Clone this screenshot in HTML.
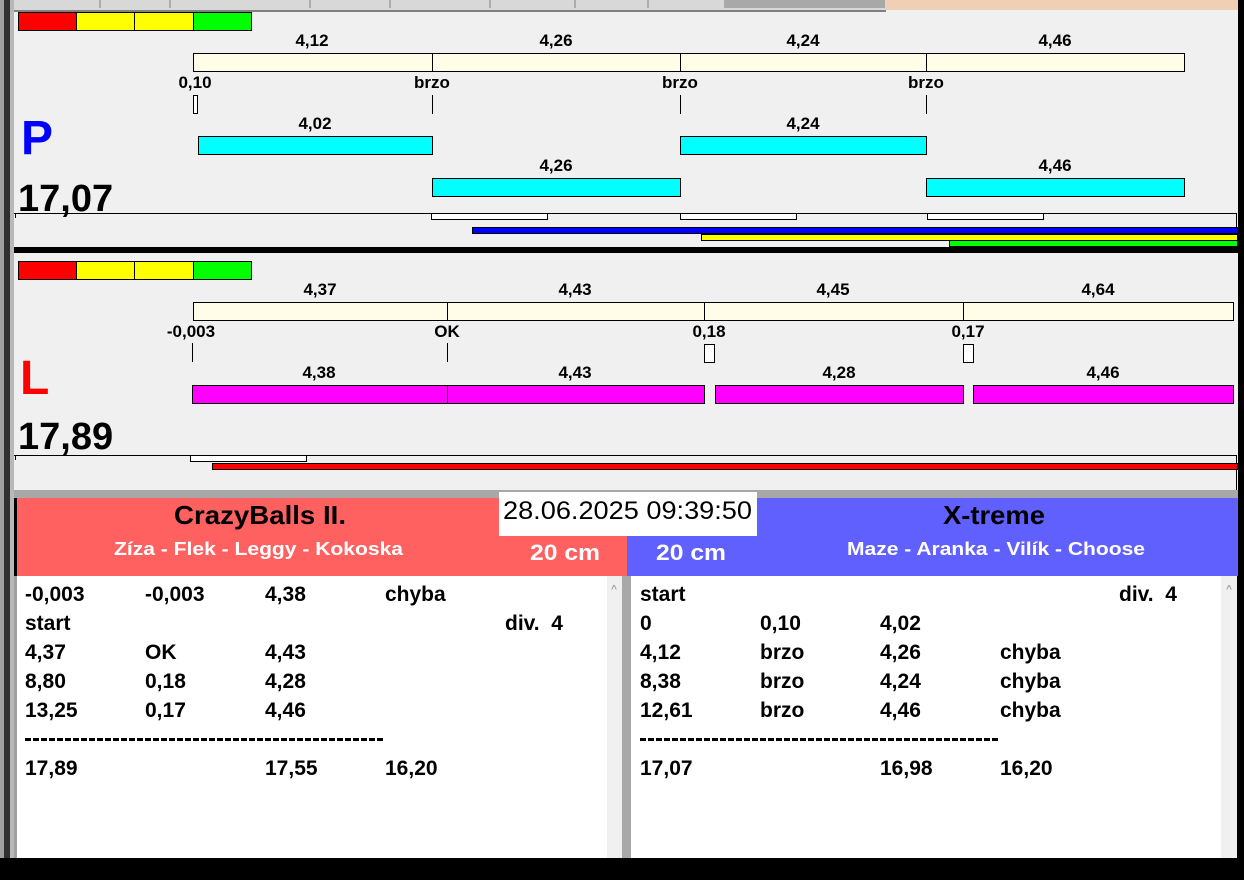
<!DOCTYPE html>
<html><head><meta charset="utf-8"><style>
html,body{margin:0;padding:0;background:#000;}
svg{display:block;font-family:"Liberation Sans",Arial,sans-serif;font-weight:bold;}
</style></head><body>
<svg width="1244" height="880" viewBox="0 0 1244 880" xmlns="http://www.w3.org/2000/svg">
<rect x="0" y="0" width="1244" height="880" fill="#000"/>
<rect x="0" y="0" width="4" height="858" fill="#a0a0a0"/>
<rect x="4" y="0" width="6" height="858" fill="#303030"/>
<rect x="10" y="0" width="4" height="858" fill="#b8b8b8"/>
<rect x="14" y="0" width="872" height="10" fill="#d8d8d8"/>
<g stroke="#808080" stroke-width="1">
<line x1="100" y1="0" x2="100" y2="8"/><line x1="170" y1="0" x2="170" y2="8"/><line x1="310" y1="0" x2="310" y2="8"/><line x1="390" y1="0" x2="390" y2="8"/><line x1="490" y1="0" x2="490" y2="8"/><line x1="575" y1="0" x2="575" y2="8"/><line x1="648" y1="0" x2="648" y2="8"/><line x1="725" y1="0" x2="725" y2="8"/>
</g>
<rect x="725" y="0" width="160" height="8" fill="#a8a8a8"/>
<rect x="886" y="0" width="352" height="12" fill="#f0d0b4"/>
<rect x="14" y="10" width="1224" height="480" fill="#f0f0f0"/>
<rect x="14" y="10" width="872" height="2" fill="#808080"/>

<g stroke="#000" stroke-width="1">
<rect x="18.5" y="12.5" width="58" height="18" fill="#ff0000"/>
<rect x="76.5" y="12.5" width="58" height="18" fill="#ffff00"/>
<rect x="134.5" y="12.5" width="59" height="18" fill="#ffff00"/>
<rect x="193.5" y="12.5" width="58" height="18" fill="#00ff00"/>
<rect x="193.5" y="53.5" width="991" height="18" fill="#fffde8"/>
<line x1="432.5" y1="53" x2="432.5" y2="72"/><line x1="680.5" y1="53" x2="680.5" y2="72"/><line x1="926.5" y1="53" x2="926.5" y2="72"/>
<rect x="193.5" y="95.5" width="4" height="18" fill="#fff"/>
<line x1="432.5" y1="95" x2="432.5" y2="114"/><line x1="680.5" y1="95" x2="680.5" y2="114"/><line x1="926.5" y1="95" x2="926.5" y2="114"/>
<rect x="198.5" y="136.5" width="234" height="18" fill="#00ffff"/>
<rect x="680.5" y="136.5" width="246" height="18" fill="#00ffff"/>
<rect x="432.5" y="178.5" width="248" height="18" fill="#00ffff"/>
<rect x="926.5" y="178.5" width="258" height="18" fill="#00ffff"/>
<line x1="14" y1="213.5" x2="1237" y2="213.5"/>
<line x1="15.5" y1="213" x2="15.5" y2="218"/>
<line x1="1236.5" y1="213" x2="1236.5" y2="246"/>
<rect x="431.5" y="213.5" width="116" height="6" fill="#fff"/>
<rect x="680.5" y="213.5" width="116" height="6" fill="#fff"/>
<rect x="927.5" y="213.5" width="116" height="6" fill="#fff"/>
<rect x="472.5" y="227.5" width="765" height="6" fill="#0000ff"/>
<rect x="701.5" y="234.5" width="536" height="6" fill="#ffff00"/>
<rect x="949.5" y="240.5" width="288" height="6" fill="#00ff00"/>
</g>
<rect x="14" y="247" width="1224" height="6" fill="#000"/>
<g font-size="17" text-anchor="middle" fill="#000">
<text x="312" y="46">4,12</text><text x="556" y="46">4,26</text><text x="803" y="46">4,24</text><text x="1055" y="46">4,46</text>
<text x="195" y="88">0,10</text><text x="432" y="88">brzo</text><text x="680" y="88">brzo</text><text x="926" y="88">brzo</text>
<text x="315" y="129">4,02</text><text x="803" y="129">4,24</text>
<text x="556" y="171">4,26</text><text x="1055" y="171">4,46</text>
</g>
<text x="21" y="154" font-size="48" fill="#0000ff">P</text>
<text x="18" y="211" font-size="38" fill="#000">17,07</text>

<g stroke="#000" stroke-width="1">
<rect x="18.5" y="261.5" width="58" height="18" fill="#ff0000"/>
<rect x="76.5" y="261.5" width="58" height="18" fill="#ffff00"/>
<rect x="134.5" y="261.5" width="59" height="18" fill="#ffff00"/>
<rect x="193.5" y="261.5" width="58" height="18" fill="#00ff00"/>
<rect x="193.5" y="302.5" width="1040" height="18" fill="#fffde8"/>
<line x1="447.5" y1="302" x2="447.5" y2="321"/><line x1="704.5" y1="302" x2="704.5" y2="321"/><line x1="963.5" y1="302" x2="963.5" y2="321"/>
<line x1="192.5" y1="343" x2="192.5" y2="362"/><line x1="447.5" y1="343" x2="447.5" y2="362"/>
<rect x="704.5" y="344.5" width="10" height="18" fill="#fff"/>
<rect x="963.5" y="344.5" width="10" height="18" fill="#fff"/>
<rect x="192.5" y="385.5" width="255" height="18" fill="#ff00ff"/>
<rect x="447.5" y="385.5" width="257" height="18" fill="#ff00ff"/>
<rect x="715.5" y="385.5" width="248" height="18" fill="#ff00ff"/>
<rect x="973.5" y="385.5" width="260" height="18" fill="#ff00ff"/>
<line x1="14" y1="455.5" x2="1237" y2="455.5"/>
<line x1="15.5" y1="455" x2="15.5" y2="460"/>
<line x1="1236.5" y1="455" x2="1236.5" y2="490"/>
<rect x="190.5" y="455.5" width="116" height="6" fill="#fff"/>
<rect x="212.5" y="463.5" width="1025" height="6" fill="#ff0000"/>
</g>
<g font-size="17" text-anchor="middle" fill="#000">
<text x="320" y="295">4,37</text><text x="575" y="295">4,43</text><text x="833" y="295">4,45</text><text x="1098" y="295">4,64</text>
<text x="191" y="337">-0,003</text><text x="447" y="337">OK</text><text x="709" y="337">0,18</text><text x="968" y="337">0,17</text>
<text x="319" y="378">4,38</text><text x="575" y="378">4,43</text><text x="839" y="378">4,28</text><text x="1103" y="378">4,46</text>
</g>
<text x="20" y="394" font-size="48" fill="#ff0000">L</text>
<text x="18" y="449" font-size="38" fill="#000">17,89</text>

<rect x="14" y="490" width="1224" height="8" fill="#a8a8a8"/>
<rect x="17" y="498" width="610" height="78" fill="#ff6060"/>
<rect x="627" y="498" width="611" height="78" fill="#6060ff"/>
<rect x="499" y="492" width="258" height="44" fill="#fff"/>
<text x="503" y="519" font-size="25" textLength="249" lengthAdjust="spacingAndGlyphs" fill="#000" style="font-weight:normal">28.06.2025 09:39:50</text>
<text x="174" y="524" font-size="26" textLength="172" lengthAdjust="spacingAndGlyphs" fill="#000">CrazyBalls II.</text>
<text x="943" y="524" font-size="26" textLength="102" lengthAdjust="spacingAndGlyphs" fill="#000">X-treme</text>
<text x="114" y="555" font-size="18" textLength="289" lengthAdjust="spacingAndGlyphs" fill="#fff">Zíza - Flek - Leggy - Kokoska</text>
<text x="847" y="555" font-size="18" textLength="298" lengthAdjust="spacingAndGlyphs" fill="#fff">Maze - Aranka - Vilík - Choose</text>
<text x="530" y="560" font-size="22" textLength="70" lengthAdjust="spacingAndGlyphs" fill="#fff">20 cm</text>
<text x="656" y="560" font-size="22" textLength="70" lengthAdjust="spacingAndGlyphs" fill="#fff">20 cm</text>

<rect x="14" y="576" width="3" height="282" fill="#a0a0a0"/>
<rect x="17" y="576" width="590" height="282" fill="#fff"/>
<rect x="607" y="576" width="15" height="282" fill="#f0f0f0"/>
<rect x="622" y="576" width="9" height="282" fill="#a8a8a8"/>
<rect x="631" y="576" width="590" height="282" fill="#fff"/>
<rect x="1221" y="576" width="16" height="282" fill="#f0f0f0"/>
<text x="614" y="592" font-size="10" text-anchor="middle" fill="#a0a0a0">^</text>
<text x="1229" y="592" font-size="10" text-anchor="middle" fill="#a0a0a0">^</text>

<g font-size="21" fill="#000">
<text x="25" y="601">-0,003</text><text x="145" y="601">-0,003</text><text x="265" y="601">4,38</text><text x="385" y="601">chyba</text>
<text x="25" y="630">start</text><text x="505" y="630" xml:space="preserve">div.  4</text>
<text x="25" y="659">4,37</text><text x="145" y="659">OK</text><text x="265" y="659">4,43</text>
<text x="25" y="688">8,80</text><text x="145" y="688">0,18</text><text x="265" y="688">4,28</text>
<text x="25" y="717">13,25</text><text x="145" y="717">0,17</text><text x="265" y="717">4,46</text>
<text x="25" y="775">17,89</text><text x="265" y="775">17,55</text><text x="385" y="775">16,20</text>

<text x="640" y="601">start</text><text x="1119" y="601" xml:space="preserve">div.  4</text>
<text x="640" y="630">0</text><text x="760" y="630">0,10</text><text x="880" y="630">4,02</text>
<text x="640" y="659">4,12</text><text x="760" y="659">brzo</text><text x="880" y="659">4,26</text><text x="1000" y="659">chyba</text>
<text x="640" y="688">8,38</text><text x="760" y="688">brzo</text><text x="880" y="688">4,24</text><text x="1000" y="688">chyba</text>
<text x="640" y="717">12,61</text><text x="760" y="717">brzo</text><text x="880" y="717">4,46</text><text x="1000" y="717">chyba</text>
<text x="640" y="775">17,07</text><text x="880" y="775">16,98</text><text x="1000" y="775">16,20</text>
</g>
<line x1="25" y1="739.5" x2="385" y2="739.5" stroke="#000" stroke-width="3" stroke-dasharray="6,2"/>
<line x1="640" y1="739.5" x2="1000" y2="739.5" stroke="#000" stroke-width="3" stroke-dasharray="6,2"/>
<rect x="1238" y="0" width="6" height="880" fill="#000"/>
</svg>
</body></html>
